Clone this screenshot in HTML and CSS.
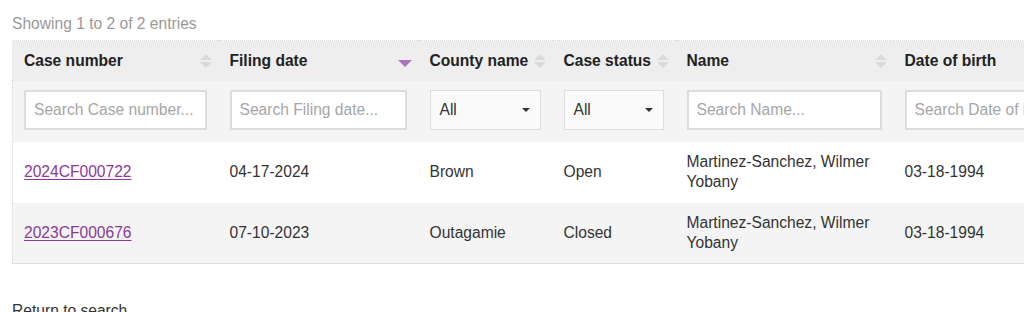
FILE: index.html
```html
<!DOCTYPE html>
<html lang="en">
<head>
<meta charset="utf-8">
<title>Case search results</title>
<link rel="stylesheet" href="styles.css">
</head>
<body>
<div class="page">
  <div class="info">Showing 1 to 2 of 2 entries</div>
  <table class="results">
    <colgroup>
      <col class="c1"><col class="c2"><col class="c3"><col class="c4"><col class="c5"><col class="c6">
    </colgroup>
    <thead>
      <tr class="head">
        <th><span class="th-in">Case number<svg class="sort" viewBox="0 0 12 14"><path d="M6 0L12 6H0Z M6 14L0 8H12Z" fill="#dadada"/></svg></span></th>
        <th><span class="th-in">Filing date<svg class="sort-desc" viewBox="0 0 14 8"><path d="M0 0H14L7 7Z" fill="#ad72bd"/></svg></span></th>
        <th><span class="th-in">County name<svg class="sort" viewBox="0 0 12 14"><path d="M6 0L12 6H0Z M6 14L0 8H12Z" fill="#dadada"/></svg></span></th>
        <th><span class="th-in">Case status<svg class="sort" viewBox="0 0 12 14"><path d="M6 0L12 6H0Z M6 14L0 8H12Z" fill="#dadada"/></svg></span></th>
        <th><span class="th-in">Name<svg class="sort" viewBox="0 0 12 14"><path d="M6 0L12 6H0Z M6 14L0 8H12Z" fill="#dadada"/></svg></span></th>
        <th><span class="th-in">Date of birth</span></th>
      </tr>
      <tr class="filters">
        <td><input class="search" type="text" placeholder="Search Case number..."></td>
        <td><input class="search" type="text" placeholder="Search Filing date..."></td>
        <td><div class="select"><span>All</span><svg class="caret" viewBox="0 0 8 4"><path d="M0 0H8L4 4Z" fill="#333"/></svg></div></td>
        <td><div class="select"><span>All</span><svg class="caret" viewBox="0 0 8 4"><path d="M0 0H8L4 4Z" fill="#333"/></svg></div></td>
        <td><input class="search" type="text" placeholder="Search Name..."></td>
        <td><input class="search" type="text" placeholder="Search Date of birth..."></td>
      </tr>
    </thead>
    <tbody>
      <tr class="row">
        <td><a href="#">2024CF000722</a></td>
        <td>04-17-2024</td>
        <td>Brown</td>
        <td>Open</td>
        <td>Martinez-Sanchez, Wilmer Yobany</td>
        <td>03-18-1994</td>
      </tr>
      <tr class="row alt">
        <td><a href="#">2023CF000676</a></td>
        <td>07-10-2023</td>
        <td>Outagamie</td>
        <td>Closed</td>
        <td>Martinez-Sanchez, Wilmer Yobany</td>
        <td>03-18-1994</td>
      </tr>
    </tbody>
  </table>
  <p class="return">Return to search</p>
</div>
</body>
</html>
```

FILE: styles.css
```css
html, body {
  margin: 0;
  padding: 0;
  overflow: hidden;
  background: #fff;
}
body {
  font-family: "Liberation Sans", Arial, sans-serif;
  font-size: 15.6px;
  line-height: 20px;
  color: #333;
}
.page {
  padding: 14px 0 0 12px;
  width: 1200px;
}
.info {
  color: #999;
  margin-bottom: 6px;
}
.results {
  border-collapse: collapse;
  table-layout: fixed;
  width: 1100px;
  border-top: 1px dotted #d6d6d6;
  border-left: 1px dotted #d6d6d6;
  border-bottom: 1px solid #dedede;
}
.c1 { width: 206px; }
.c2 { width: 200px; }
.c3 { width: 134px; }
.c4 { width: 123px; }
.c5 { width: 218px; }
.c6 { width: 219px; }
.head th {
  background: #eeeeee;
  text-align: left;
  font-weight: bold;
  padding: 10px 7px 10px 11px;
  color: #222;
}
.th-in {
  display: flex;
  align-items: center;
  justify-content: space-between;
}
.sort {
  width: 12px;
  height: 14px;
  flex: none;
}
.sort-desc {
  width: 14px;
  height: 8px;
  flex: none;
  margin-top: 6px;
}
.filters td {
  background: #f4f4f4;
  padding: 9px 12px 12px 11px;
}
.search {
  box-sizing: border-box;
  width: 100%;
  height: 40px;
  border: 2px solid #dcdcdc;
  background: #fff;
  padding: 0 8px;
  font: inherit;
  color: #333;
  outline: none;
}
.search::placeholder {
  color: #a6a6a6;
}
.select {
  box-sizing: border-box;
  height: 40px;
  border: 1px solid #dedede;
  background: #fafafa;
  display: flex;
  align-items: center;
  justify-content: space-between;
  padding: 0 10px 0 9px;
}
.caret {
  width: 8px;
  height: 4px;
}
.row td {
  padding: 10px 11px 11px;
  background: #fff;
  vertical-align: middle;
}
.row.alt td {
  background: #f4f4f4;
  padding-bottom: 10px;
}
.row a {
  color: #8b3a98;
  text-decoration: underline;
  text-underline-offset: 2px;
}
.return {
  margin: 37px 0 0 0;
  color: #333;
}
```
